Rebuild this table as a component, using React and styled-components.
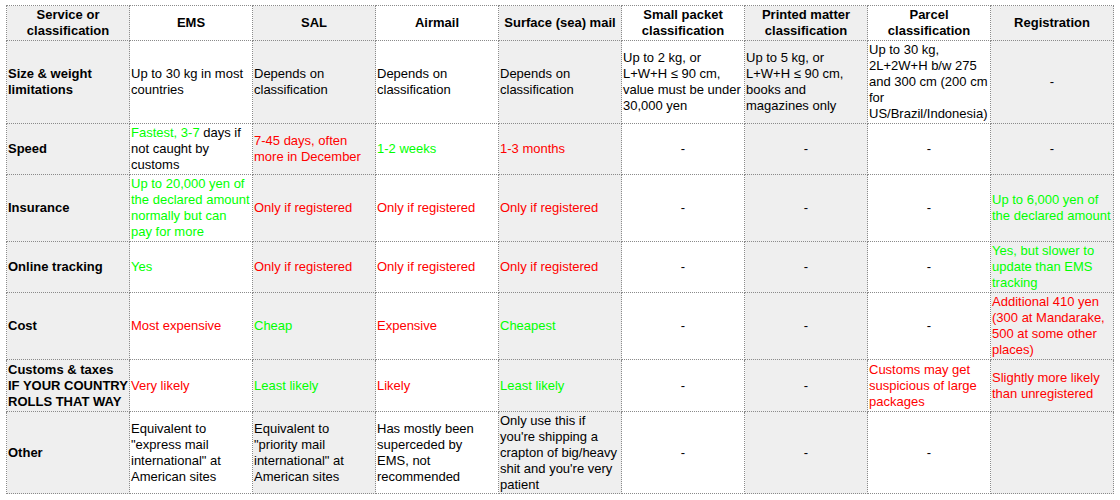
import React from "react";
import styled, { createGlobalStyle } from "styled-components";

const GlobalStyle = createGlobalStyle`
  body {
    margin: 0;
    background: #ffffff;
    font-family: "Liberation Sans", Arial, sans-serif;
  }
`;

const Page = styled.div`
  padding: 5px 0 0 6px;
`;

const Table = styled.table`
  border-collapse: collapse;
  table-layout: fixed;
  width: 1108px;
  font-size: 13px;
  line-height: 16px;
  color: #000000;
`;

const Col = styled.col`
  width: 123px;
`;

const Head = styled.th`
  height: 34px;
  padding: 0 1px;
  border: 1px dotted #8a8a8a;
  background: ${(p) => (p.$shade ? "#efefef" : "#ffffff")};
  font-weight: bold;
  text-align: center;
  vertical-align: middle;
`;

const Label = styled.td`
  padding: 0 1px;
  border: 1px dotted #8a8a8a;
  background: #efefef;
  font-weight: bold;
  vertical-align: middle;
`;

const Cell = styled.td`
  padding: 0 1px;
  border: 1px dotted #8a8a8a;
  background: ${(p) => (p.$shade ? "#efefef" : "#ffffff")};
  color: ${(p) => (p.$tone === "good" ? "#00ff00" : p.$tone === "bad" ? "#ff0000" : "#000000")};
  text-align: ${(p) => (p.$center ? "center" : "left")};
  vertical-align: middle;
`;

const Good = styled.span`
  color: #00ff00;
`;

const headers = [
  "Service or classification",
  "EMS",
  "SAL",
  "Airmail",
  "Surface (sea) mail",
  "Small packet classification",
  "Printed matter classification",
  "Parcel classification",
  "Registration",
];

const D = { text: "-" };

const rows = [
  {
    label: "Size & weight limitations",
    height: 83,
    cells: [
      { text: "Up to 30 kg in most countries" },
      { text: "Depends on classification" },
      { text: "Depends on classification" },
      { text: "Depends on classification" },
      { text: "Up to 2 kg, or L+W+H ≤ 90 cm, value must be under 30,000 yen" },
      { text: "Up to 5 kg, or L+W+H ≤ 90 cm, books and magazines only" },
      { text: "Up to 30 kg, 2L+2W+H b/w 275 and 300 cm (200 cm for US/Brazil/Indonesia)" },
      D,
    ],
  },
  {
    label: "Speed",
    height: 51,
    cells: [
      {
        node: (
          <>
            <Good>Fastest, 3-7</Good> days if not caught by customs
          </>
        ),
      },
      { text: "7-45 days, often more in December", tone: "bad" },
      { text: "1-2 weeks", tone: "good" },
      { text: "1-3 months", tone: "bad" },
      D,
      D,
      D,
      D,
    ],
  },
  {
    label: "Insurance",
    height: 67,
    cells: [
      {
        node: (
          <>
            Up to 20,000 yen of the declared amount normally but can
            <br />
            pay for more
          </>
        ),
        tone: "good",
      },
      { text: "Only if registered", tone: "bad" },
      { text: "Only if registered", tone: "bad" },
      { text: "Only if registered", tone: "bad" },
      D,
      D,
      D,
      { text: "Up to 6,000 yen of the declared amount", tone: "good" },
    ],
  },
  {
    label: "Online tracking",
    height: 51,
    cells: [
      { text: "Yes", tone: "good" },
      { text: "Only if registered", tone: "bad" },
      { text: "Only if registered", tone: "bad" },
      { text: "Only if registered", tone: "bad" },
      D,
      D,
      D,
      { text: "Yes, but slower to update than EMS tracking", tone: "good" },
    ],
  },
  {
    label: "Cost",
    height: 67,
    cells: [
      { text: "Most expensive", tone: "bad" },
      { text: "Cheap", tone: "good" },
      { text: "Expensive", tone: "bad" },
      { text: "Cheapest", tone: "good" },
      D,
      D,
      D,
      { text: "Additional 410 yen (300 at Mandarake, 500 at some other places)", tone: "bad" },
    ],
  },
  {
    label: (
      <>
        Customs &amp; taxes
        <br />
        IF YOUR COUNTRY ROLLS THAT WAY
      </>
    ),
    height: 52,
    cells: [
      { text: "Very likely", tone: "bad" },
      { text: "Least likely", tone: "good" },
      { text: "Likely", tone: "bad" },
      { text: "Least likely", tone: "good" },
      D,
      D,
      { text: "Customs may get suspicious of large packages", tone: "bad" },
      { text: "Slightly more likely than unregistered", tone: "bad" },
    ],
  },
  {
    label: "Other",
    height: 82,
    cells: [
      { text: 'Equivalent to "express mail international" at American sites' },
      { text: 'Equivalent to "priority mail international" at American sites' },
      { text: "Has mostly been superceded by EMS, not recommended" },
      { text: "Only use this if you're shipping a crapton of big/heavy shit and you're very patient" },
      D,
      D,
      D,
      { text: "" },
    ],
  },
];

export default function App() {
  return (
    <Page>
      <GlobalStyle />
      <Table>
        <colgroup>
          {headers.map((h) => (
            <Col key={h} />
          ))}
        </colgroup>
        <thead>
          <tr>
            {headers.map((h, i) => (
              <Head key={h} $shade={i % 2 === 0}>
                {h}
              </Head>
            ))}
          </tr>
        </thead>
        <tbody>
          {rows.map((row, r) => (
            <tr key={r} style={{ height: row.height }}>
              <Label>{row.label}</Label>
              {row.cells.map((c, i) => (
                <Cell key={i} $shade={i % 2 === 1} $tone={c.tone} $center={c.text === "-"}>
                  {c.node || c.text}
                </Cell>
              ))}
            </tr>
          ))}
        </tbody>
      </Table>
    </Page>
  );
}
